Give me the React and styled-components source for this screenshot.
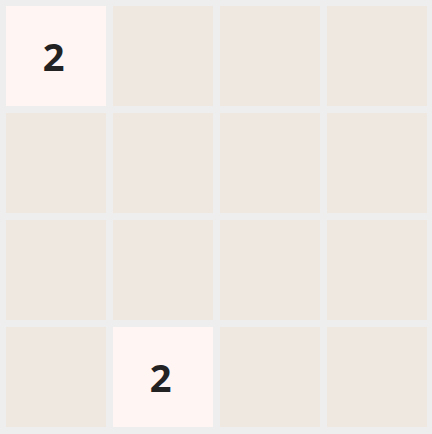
import React from 'react';
import styled, { createGlobalStyle } from 'styled-components';

const GlobalStyle = createGlobalStyle`
    html, body {
        margin: 0;
        padding: 0;
        background: #eeeeee;
        font-family: "Open Sans", "Noto Sans", sans-serif;
    }
`;

const Board = styled.div`
    display: grid;
    grid-template-columns: repeat(4, 100px);
    grid-auto-rows: 100px;
    gap: 7px;
    padding: 6px 5px 7px 6px;
    width: 432px;
    height: 434px;
    box-sizing: border-box;
    background: #eeeeee;
`;

const Cell = styled.div`
    display: flex;
    align-items: center;
    justify-content: center;
    padding-right: 5px;
    background: ${(p) => (p.value ? '#fff5f3' : '#efe8e1')};
    color: #222222;
    font-size: 38px;
    font-weight: 700;
`;

const grid = [
    [2, 0, 0, 0],
    [0, 0, 0, 0],
    [0, 0, 0, 0],
    [0, 2, 0, 0],
];

const App = () => {
    return (
        <>
            <GlobalStyle />
            <Board>
                {grid.flat().map((v, i) => (
                    <Cell key={i} value={v}>{v ? v : ''}</Cell>
                ))}
            </Board>
        </>
    );
};

export default App;
